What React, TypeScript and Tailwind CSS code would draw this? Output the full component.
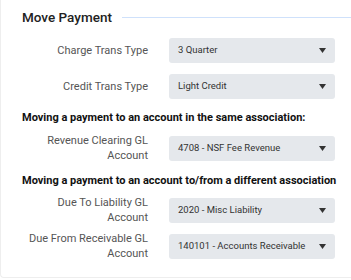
import React from "react";

const rows1 = [
  { label: ["Charge Trans Type"], value: "3 Quarter" },
  { label: ["Credit Trans Type"], value: "Light Credit" },
];

function Caret() {
  return (
    <svg width="7" height="5" viewBox="0 0 7 5" className="shrink-0">
      <path d="M0 0h7L3.5 5z" fill="#333" />
    </svg>
  );
}

function Row({ label, value }: { label: string[]; value: string }) {
  return (
    <div className="flex items-center">
      <div className="w-[126px] whitespace-nowrap text-right text-[11px] leading-[15px] text-[#555]">
        {label.map((l) => (
          <div key={l}>{l}</div>
        ))}
      </div>
      <div className="ml-[21px] flex h-[25px] w-[166px] items-center justify-between rounded-[3px] bg-[#e5e8ec] pl-[9px] pr-[9px] text-[9.5px] text-[#333]">
        <span>{value}</span>
        <Caret />
      </div>
    </div>
  );
}

export default function App() {
  return (
    <div className="h-[280px] w-[351px] overflow-hidden bg-white font-['Roboto',sans-serif]">
      <div className="h-[278px] rounded-bl-[4px] border-b border-l border-[#eeeeee] pl-[21px]">
        <div className="flex items-center pt-[8px]">
          <h2 className="text-[13.5px] font-medium leading-[18px] text-[#222]">Move Payment</h2>
          <div className="ml-[10px] h-px flex-1 bg-[#cfe1fb]" />
        </div>
        <div className="mt-[12px] flex flex-col gap-[11px]">
          {rows1.map((r) => (
            <Row key={r.value} {...r} />
          ))}
        </div>
        <div className="mt-[12px] whitespace-nowrap text-[11px] font-bold leading-[14px] text-[#111]">
          Moving a payment to an account in the same association:
        </div>
        <div className="mt-[8px]">
          <Row label={["Revenue Clearing GL", "Account"]} value="4708 - NSF Fee Revenue" />
        </div>
        <div className="mt-[11px] whitespace-nowrap text-[11px] font-bold leading-[14px] text-[#111]">
          Moving a payment to an account to/from a different association
        </div>
        <div className="mt-[7px] flex flex-col gap-[6px]">
          <Row label={["Due To Liability GL", "Account"]} value="2020 - Misc Liability" />
          <Row label={["Due From Receivable GL", "Account"]} value="140101 - Accounts Receivable" />
        </div>
      </div>
    </div>
  );
}
